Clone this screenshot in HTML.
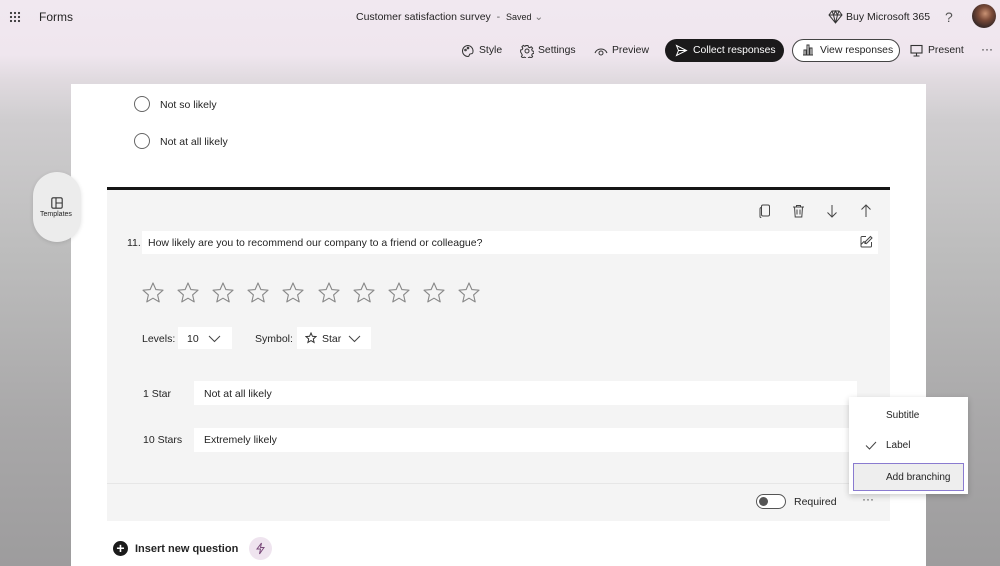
<!DOCTYPE html>
<html><head><meta charset="utf-8"><style>
*{box-sizing:border-box;margin:0;padding:0}
body{width:1000px;height:566px;overflow:hidden;position:relative;font-family:"Liberation Sans",sans-serif;color:#242424;
background:linear-gradient(180deg,#f1e8f0 0px,#efe6ee 55px,#e0dadf 80px,#cfcdcf 120px,#bdbdbd 250px,#a9a8a9 420px,#9d9c9d 566px)}
.a{position:absolute}
.t{font-size:11px;white-space:nowrap}
.tb{font-size:10.4px}
svg{display:block}
.star{position:absolute;top:281px}
</style></head><body>
<svg class="a" style="left:9px;top:11px" width="12" height="12" viewBox="0 0 12 12" fill="#333"><circle cx="2" cy="2" r="1.1"/><circle cx="6" cy="2" r="1.1"/><circle cx="10" cy="2" r="1.1"/><circle cx="2" cy="6" r="1.1"/><circle cx="6" cy="6" r="1.1"/><circle cx="10" cy="6" r="1.1"/><circle cx="2" cy="10" r="1.1"/><circle cx="6" cy="10" r="1.1"/><circle cx="10" cy="10" r="1.1"/></svg>
<div class="a t" style="left:39px;top:10px;font-size:12px">Forms</div>
<div class="a t" style="left:356px;top:11px;font-size:10.5px">Customer satisfaction survey <span style="color:#555">&nbsp;-&nbsp; </span><span style="font-size:9px">Saved</span> <span style="color:#777">&#8964;</span></div>
<svg class="a" style="left:828px;top:10px" width="15" height="14" viewBox="0 0 15 14" fill="none" stroke="#333" stroke-width="1"><path d="M4 1h7l3 4-6.5 8L1 5z M1 5h13 M5.5 5l2 8 2-8 M4 1l1.5 4 2-4 2 4 1.5-4"/></svg>
<div class="a t" style="left:846px;top:11px;font-size:10.5px">Buy Microsoft 365</div>
<div class="a t" style="left:945px;top:9px;font-size:14px;color:#555">?</div>
<div class="a" style="left:972px;top:4px;width:24px;height:24px;border-radius:50%;background:radial-gradient(circle at 55% 40%,#c99274 0,#7a4a38 35%,#3a2a28 70%,#6b5a50 100%)"></div>

<svg class="a" style="left:461px;top:44px" width="14" height="14" viewBox="0 0 14 14" fill="none" stroke="#333" stroke-width="1"><path d="M7 1.5a5.5 5.5 0 1 0 0 11c1.5 0 1-2 2-2.5s3 .5 3-2.5A5.5 5.5 0 0 0 7 1.5z"/><circle cx="4.5" cy="6" r=".8"/><circle cx="7" cy="4" r=".8"/></svg>
<div class="a t tb" style="left:479px;top:45px">Style</div>
<svg class="a" style="left:520px;top:44px" width="14" height="14" viewBox="0 0 14 14" fill="none" stroke="#333" stroke-width="1"><circle cx="7" cy="7" r="2"/><path d="M6 1.5h2l.4 1.6 1.4.6 1.4-.9 1.4 1.4-.9 1.4.6 1.4 1.6.4v2l-1.6.4-.6 1.4.9 1.4-1.4 1.4-1.4-.9-1.4.6-.4 1.6H6l-.4-1.6-1.4-.6-1.4.9-1.4-1.4.9-1.4-.6-1.4L.6 8V6l1.6-.4.6-1.4-.9-1.4 1.4-1.4 1.4.9 1.4-.6z"/></svg>
<div class="a t tb" style="left:538px;top:45px">Settings</div>
<svg class="a" style="left:594px;top:46px" width="14" height="10" viewBox="0 0 14 10" fill="none" stroke="#333" stroke-width="1"><path d="M1 7a6.5 6.5 0 0 1 12 0"/><circle cx="7" cy="7" r="2"/></svg>
<div class="a t tb" style="left:612px;top:45px">Preview</div>
<div class="a" style="left:665px;top:39px;width:119px;height:23px;border-radius:12px;background:#1b1a1b"></div>
<svg class="a" style="left:675px;top:44px" width="13" height="13" viewBox="0 0 13 13" fill="none" stroke="#fff" stroke-width="1"><path d="M1.5 1.5l10 5-10 5 2-5z M3.5 6.5h8"/></svg>
<div class="a t tb" style="left:693px;top:45px;color:#fff">Collect responses</div>
<div class="a" style="left:792px;top:39px;width:108px;height:23px;border-radius:12px;border:1px solid #444;background:#fff"></div>
<svg class="a" style="left:802px;top:44px" width="12" height="12" viewBox="0 0 12 12" fill="none" stroke="#333" stroke-width="1"><path d="M1 11h10 M2 11V6h2v5 M5 11V1h2v10 M8 11V4h2v7"/></svg>
<div class="a t tb" style="left:820px;top:45px">View responses</div>
<svg class="a" style="left:910px;top:44px" width="13" height="13" viewBox="0 0 13 13" fill="none" stroke="#333" stroke-width="1.1"><rect x="1" y="1.5" width="11" height="7.5"/><path d="M6.5 9v3 M3.5 12h6"/></svg>
<div class="a t tb" style="left:928px;top:45px">Present</div>
<div class="a t" style="left:981px;top:42px;font-size:12px">···</div>

<div class="a" style="left:71px;top:84px;width:855px;height:482px;background:#fff"></div>
<div class="a" style="left:134px;top:96px;width:16px;height:16px;border:1.3px solid #666;border-radius:50%"></div>
<div class="a t" style="left:160px;top:99px;font-size:10.5px">Not so likely</div>
<div class="a" style="left:134px;top:133px;width:16px;height:16px;border:1.3px solid #666;border-radius:50%"></div>
<div class="a t" style="left:160px;top:136px;font-size:10.5px">Not at all likely</div>

<div class="a" style="left:33px;top:172px;width:48px;height:70px;border-radius:24px;background:#ececec;box-shadow:0 1px 4px rgba(0,0,0,.12)"></div>
<svg class="a" style="left:51px;top:197px" width="12" height="12" viewBox="0 0 12 12" fill="none" stroke="#333" stroke-width="1.1"><rect x=".8" y=".8" width="10.4" height="10.4" rx="1.5"/><path d="M5 .8v10.4 M5 6h6.2"/></svg>
<div class="a t" style="left:40px;top:211px;font-size:7px">Templates</div>

<div class="a" style="left:107px;top:187px;width:783px;height:334px;background:#f4f4f4;border-top:3px solid #151515"></div>
<div class="a" style="left:107px;top:483px;width:783px;height:1px;background:#e6e6e6"></div>
<svg class="a" style="left:759px;top:204px" width="13" height="14" viewBox="0 0 13 14" fill="none" stroke="#444" stroke-width="1"><rect x="2.5" y="1" width="8" height="11" rx="1.5"/><path d="M2.5 3.5A1.5 1.5 0 0 0 1 5v7.5A1.5 1.5 0 0 0 2.5 14"/></svg>
<svg class="a" style="left:792px;top:204px" width="13" height="14" viewBox="0 0 13 14" fill="none" stroke="#444" stroke-width="1"><path d="M1 3h11 M4.5 3V1.5h4V3 M2.5 3l.7 10h6.6l.7-10 M5 5.5v5 M8 5.5v5"/></svg>
<svg class="a" style="left:826px;top:204px" width="12" height="14" viewBox="0 0 12 14" fill="none" stroke="#444" stroke-width="1"><path d="M6 1v12 M1.5 8.5L6 13l4.5-4.5"/></svg>
<svg class="a" style="left:860px;top:204px" width="12" height="14" viewBox="0 0 12 14" fill="none" stroke="#444" stroke-width="1"><path d="M6 13V1 M1.5 5.5L6 1l4.5 4.5"/></svg>
<div class="a t" style="left:127px;top:237px;font-size:10.5px">11.</div>
<div class="a" style="left:142px;top:231px;width:736px;height:23px;background:#fff"></div>
<div class="a t" style="left:148px;top:237px;font-size:10.5px">How likely are you to recommend our company to a friend or colleague?</div>
<svg class="a" style="left:860px;top:235px" width="13" height="13" viewBox="0 0 13 13" fill="none" stroke="#444" stroke-width="1"><path d="M6 1.5H2a1 1 0 0 0-1 1v8.5a1 1 0 0 0 1 1h8.5a1 1 0 0 0 1-1V7 M1 9.5l3-3 2.5 2.5 M10.5 1.5l1.5 1.5-5 5-2 .5.5-2z"/></svg>

<svg width="0" height="0" style="position:absolute"><defs><symbol id="s" viewBox="0 0 24 24"><path d="M12 2l2.9 6.6 7.1.6-5.4 4.7 1.6 7-6.2-3.7-6.2 3.7 1.6-7L2 9.2l7.1-.6z" fill="none" stroke="#888" stroke-width="1.1" stroke-linejoin="round"/></symbol></defs></svg>
<svg class="star" style="left:141px" width="24" height="24"><use href="#s"/></svg>
<svg class="star" style="left:176px" width="24" height="24"><use href="#s"/></svg>
<svg class="star" style="left:211px" width="24" height="24"><use href="#s"/></svg>
<svg class="star" style="left:246px" width="24" height="24"><use href="#s"/></svg>
<svg class="star" style="left:281px" width="24" height="24"><use href="#s"/></svg>
<svg class="star" style="left:317px" width="24" height="24"><use href="#s"/></svg>
<svg class="star" style="left:352px" width="24" height="24"><use href="#s"/></svg>
<svg class="star" style="left:387px" width="24" height="24"><use href="#s"/></svg>
<svg class="star" style="left:422px" width="24" height="24"><use href="#s"/></svg>
<svg class="star" style="left:457px" width="24" height="24"><use href="#s"/></svg>

<div class="a t" style="left:142px;top:333px;font-size:10.5px">Levels:</div>
<div class="a" style="left:178px;top:327px;width:54px;height:22px;background:#fff"></div>
<div class="a t" style="left:187px;top:333px;font-size:10.5px">10</div>
<svg class="a" style="left:208px;top:335px" width="13" height="8" viewBox="0 0 13 8" fill="none" stroke="#444" stroke-width="1"><path d="M1 1l5.5 5.5L12 1"/></svg>
<div class="a t" style="left:255px;top:333px;font-size:10.5px">Symbol:</div>
<div class="a" style="left:297px;top:327px;width:74px;height:22px;background:#fff"></div>
<svg class="a" style="left:305px;top:332px" width="12" height="12" viewBox="0 0 24 24"><path d="M12 2l2.9 6.6 7.1.6-5.4 4.7 1.6 7-6.2-3.7-6.2 3.7 1.6-7L2 9.2l7.1-.6z" fill="none" stroke="#333" stroke-width="2"/></svg>
<div class="a t" style="left:322px;top:333px;font-size:10.5px">Star</div>
<svg class="a" style="left:348px;top:335px" width="13" height="8" viewBox="0 0 13 8" fill="none" stroke="#444" stroke-width="1"><path d="M1 1l5.5 5.5L12 1"/></svg>

<div class="a t" style="left:143px;top:388px;font-size:10.5px">1 Star</div>
<div class="a" style="left:194px;top:381px;width:663px;height:24px;background:#fff"></div>
<div class="a t" style="left:204px;top:388px;font-size:10.5px">Not at all likely</div>
<div class="a t" style="left:143px;top:434px;font-size:10.5px">10 Stars</div>
<div class="a" style="left:194px;top:428px;width:663px;height:24px;background:#fff"></div>
<div class="a t" style="left:204px;top:434px;font-size:10.5px">Extremely likely</div>

<div class="a" style="left:756px;top:494px;width:30px;height:15px;border:1px solid #555;border-radius:8px;background:#fff"></div>
<div class="a" style="left:759px;top:497px;width:9px;height:9px;border-radius:50%;background:#555"></div>
<div class="a t" style="left:794px;top:496px;font-size:10.5px">Required</div>
<div class="a t" style="left:862px;top:492px;font-size:12px;color:#444">···</div>

<div class="a" style="left:849px;top:397px;width:119px;height:97px;background:#fff;box-shadow:0 2px 6px rgba(0,0,0,.2)"></div>
<div class="a t" style="left:886px;top:410px;font-size:10px">Subtitle</div>
<svg class="a" style="left:865px;top:441px" width="12" height="9" viewBox="0 0 12 9" fill="none" stroke="#444" stroke-width="1"><path d="M1 4.5l3.5 3.5L11 1"/></svg>
<div class="a t" style="left:886px;top:440px;font-size:10px">Label</div>
<div class="a" style="left:853px;top:463px;width:111px;height:28px;background:#eeeeee;border:1.5px solid #8a7bd0"></div>
<div class="a t" style="left:886px;top:472px;font-size:10px">Add branching</div>

<div class="a" style="left:113px;top:541px;width:15px;height:15px;border-radius:50%;background:#1b1b1b;color:#fff;font-size:14px;line-height:14px;text-align:center;font-weight:bold">+</div>
<div class="a t" style="left:135px;top:543px;font-size:11px;font-weight:bold;color:#242424">Insert new question</div>
<div class="a" style="left:249px;top:537px;width:23px;height:23px;border-radius:50%;background:#efe4ef"></div>
<svg class="a" style="left:255px;top:542px" width="11" height="13" viewBox="0 0 11 13" fill="none" stroke="#7a4a7a" stroke-width="1"><path d="M6.5 1L2 7h3.5l-1 5 4.5-6.5H5.5z"/></svg>
</body></html>
